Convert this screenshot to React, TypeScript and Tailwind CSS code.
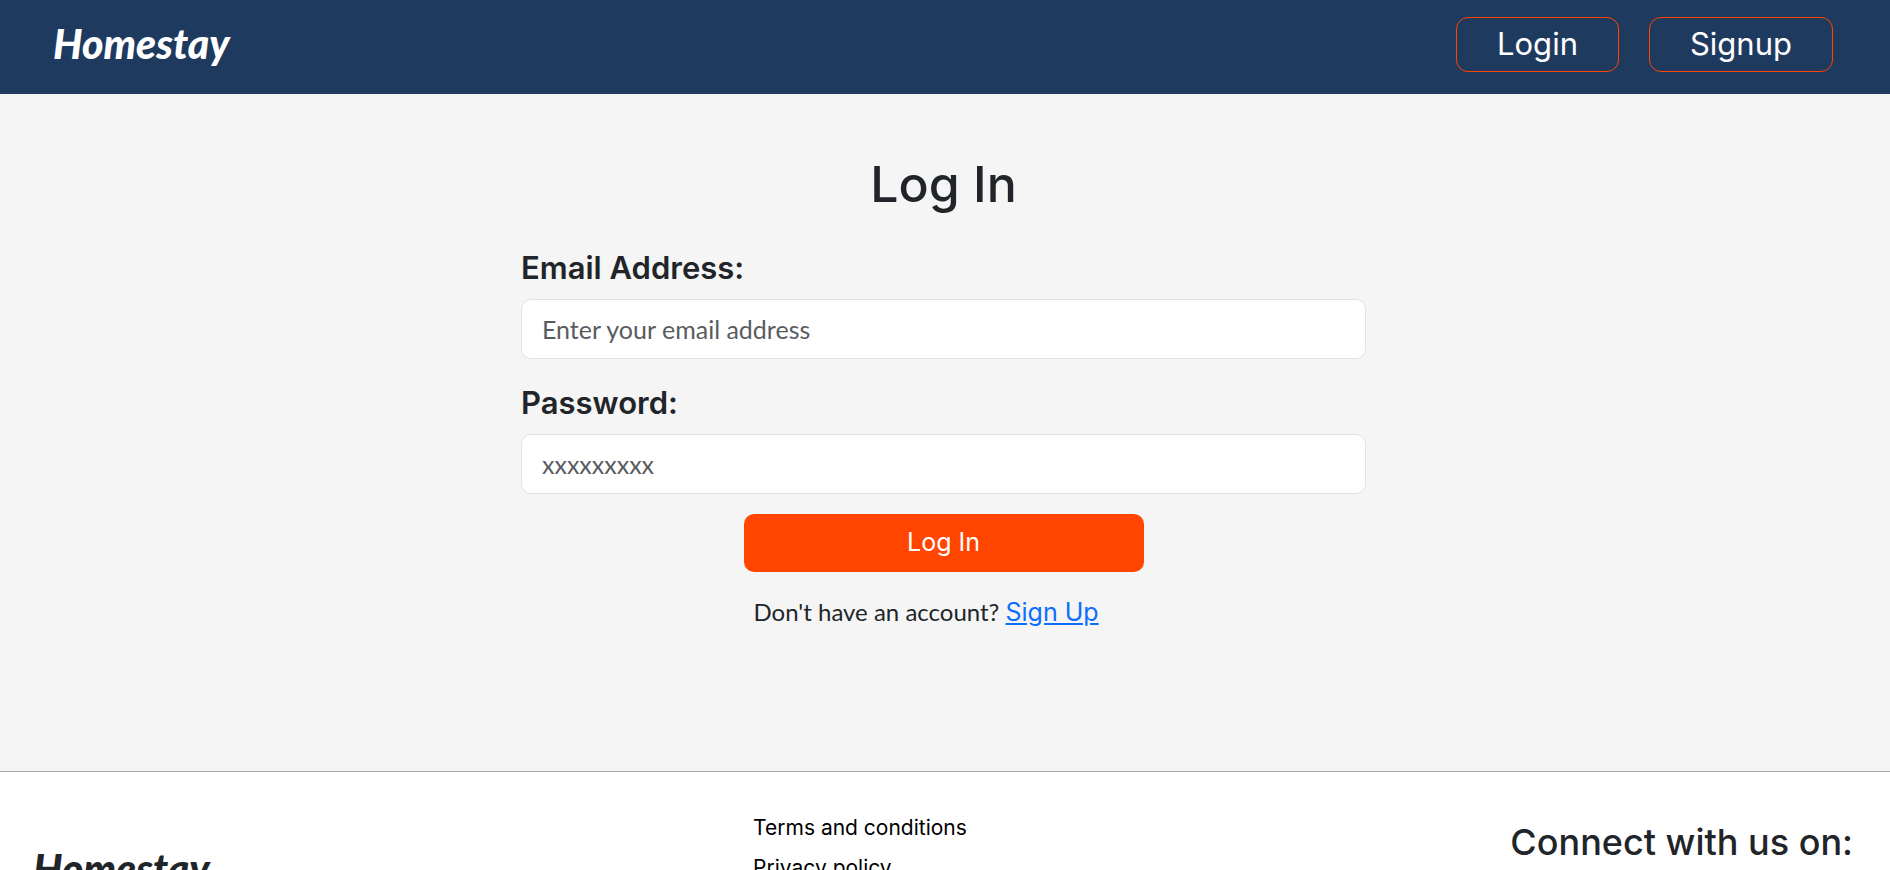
const fieldClass =
  "block h-15 w-full rounded-[10px] border border-[#dee2e6] bg-white px-5 font-['Lato',sans-serif] text-[25px] text-[#212529] placeholder:text-[#595c5f] focus:outline-2 focus:outline-[#ff4500]";

const navLinkClass =
  "flex h-[55px] items-center rounded-xl border border-[#ff4500] px-10 text-[31px] text-white";

const labelClass = "mb-2 text-[31px] leading-[47px] font-semibold";

function Logo() {
  return (
    <span className="font-['Lato',sans-serif] text-[41px] leading-[64px] font-black italic">
      Homestay
    </span>
  );
}

function Navbar() {
  return (
    <header className="flex h-[94px] items-start justify-between bg-[#1f3a5f] pr-[57px] pl-[53px]">
      <a href="#home" className="pt-3 text-white">
        <Logo />
      </a>
      <nav className="flex gap-[30px] pt-[17px]">
        <a href="#login" className={navLinkClass}>
          Login
        </a>
        <a href="#signup" className={navLinkClass}>
          Signup
        </a>
      </nav>
    </header>
  );
}

function LoginForm() {
  return (
    <main className="border-b border-[#aaaaaa] bg-[#f5f5f5] pt-[54px] pr-[3px] pb-[140px]">
      <form
        className="mx-auto flex w-[845px] max-w-full flex-col"
        onSubmit={(e) => e.preventDefault()}
      >
        <h1 className="mb-6 text-center text-[50px] leading-[72px] font-medium">Log In</h1>
        <label htmlFor="email" className={labelClass}>
          Email Address:
        </label>
        <input id="email" type="email" placeholder="Enter your email address" className={fieldClass} />
        <label htmlFor="password" className={`mt-5 ${labelClass}`}>
          Password:
        </label>
        <input id="password" type="password" placeholder="xxxxxxxxx" className={fieldClass} />
        <button
          type="submit"
          className="mt-5 h-[58px] w-[400px] cursor-pointer self-center rounded-[10px] bg-[#ff4500] text-[25px] text-white"
        >
          Log In
        </button>
        <p className="mt-5 w-[400px] self-center px-[10px] font-['Lato',sans-serif] text-[25px] leading-[38px] whitespace-nowrap">
          <span className="text-[24px]">Don't have an account? </span>
          <a href="#signup" className="font-['Inter',sans-serif] text-[#0d6efd] underline">
            Sign Up
          </a>
        </p>
      </form>
    </main>
  );
}

function Footer() {
  return (
    <footer className="flex items-start justify-between bg-white pr-[37px] pl-[33px]">
      <div className="pt-[65px]">
        <Logo />
      </div>
      <ul className="pt-9 text-[21px] leading-[40px] text-black">
        <li>
          <a href="#terms">Terms and conditions</a>
        </li>
        <li>
          <a href="#privacy">Privacy policy</a>
        </li>
      </ul>
      <h2 className="pt-12 text-[36px] leading-[44px] font-medium">Connect with us on:</h2>
    </footer>
  );
}

export default function App() {
  return (
    <div className="h-screen overflow-x-hidden overflow-y-auto bg-white font-['Inter',sans-serif] text-[#212529] [scrollbar-width:none]">
      <Navbar />
      <LoginForm />
      <Footer />
    </div>
  );
}
